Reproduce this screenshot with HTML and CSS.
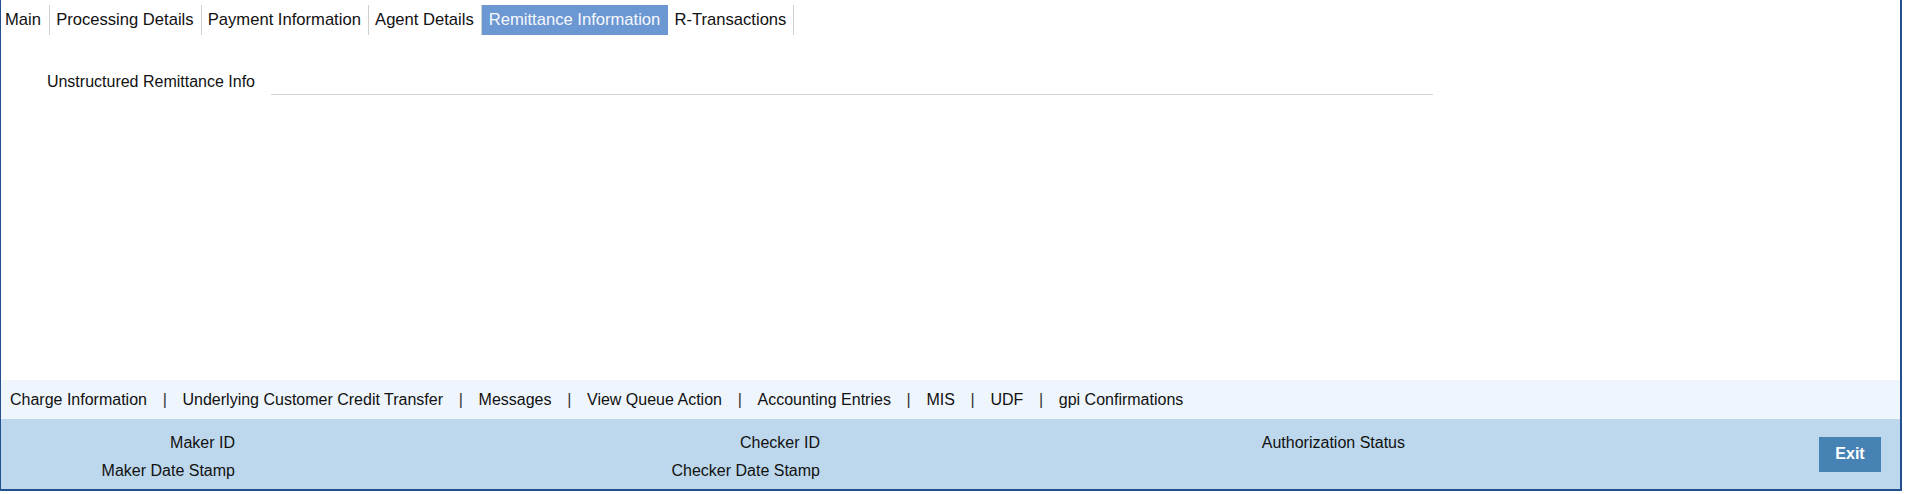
FILE: index.html
```html
<!DOCTYPE html>
<html lang="en">
<head>
<meta charset="utf-8">
<title>Remittance Information</title>
<link rel="stylesheet" href="styles.css">
</head>
<body>
<div class="frame">
  <ul class="tabs">
    <li class="tab first">Main</li>
    <li class="tab">Processing Details</li>
    <li class="tab">Payment Information</li>
    <li class="tab">Agent Details</li>
    <li class="tab active">Remittance Information</li>
    <li class="tab">R-Transactions</li>
  </ul>

  <div class="content">
    <div class="field-row">
      <label class="field-label" for="uri">Unstructured Remittance Info</label>
      <input class="field-input" id="uri" type="text">
    </div>
  </div>

  <nav class="links">
    <a class="link">Charge Information</a><span class="sep">|</span>
    <a class="link">Underlying Customer Credit Transfer</a><span class="sep">|</span>
    <a class="link">Messages</a><span class="sep">|</span>
    <a class="link">View Queue Action</a><span class="sep">|</span>
    <a class="link">Accounting Entries</a><span class="sep">|</span>
    <a class="link">MIS</a><span class="sep">|</span>
    <a class="link">UDF</a><span class="sep">|</span>
    <a class="link">gpi Confirmations</a>
  </nav>

  <div class="audit">
    <div class="audit-fields">
      <span class="audit-label">Maker ID</span><span class="audit-value"></span>
      <span class="audit-label">Checker ID</span><span class="audit-value"></span>
      <span class="audit-label">Authorization Status</span><span class="audit-value"></span>
      <span class="audit-label">Maker Date Stamp</span><span class="audit-value"></span>
      <span class="audit-label">Checker Date Stamp</span><span class="audit-value"></span>
      <span class="audit-label"></span><span class="audit-value"></span>
    </div>
    <button class="exit-btn" type="button">Exit</button>
  </div>
</div>
</body>
</html>
```

FILE: styles.css
```css
html, body {
  margin: 0;
  padding: 0;
  background: #ffffff;
}

body {
  font-family: "Liberation Sans", Arial, sans-serif;
  color: #111111;
}

.frame {
  box-sizing: border-box;
  width: 1902px;
  height: 491px;
  border-left: 1px solid #23508f;
  border-right: 2px solid #23508f;
  border-bottom: 2px solid #23508f;
  display: flex;
  flex-direction: column;
}

/* Tabs */
.tabs {
  list-style: none;
  margin: 5px 0 0 0;
  padding: 0;
  display: flex;
  height: 30px;
}

.tab {
  font-size: 16.6px;
  line-height: 30px;
  padding: 0 7px 0 6.2px;
  border-right: 1px solid #cfcfcf;
  color: #111111;
  white-space: nowrap;
}

.tab.first {
  padding-left: 4px;
  padding-right: 8px;
}

.tab.active {
  background: #6b97d3;
  color: #f7f9fc;
  border-right-color: #6b97d3;
  padding: 0 7px;
}

/* Content */
.content {
  flex: 1;
}

.field-row {
  display: flex;
  align-items: center;
  height: 26px;
  margin-top: 34px;
}

.field-label {
  width: 254px;
  text-align: right;
  font-size: 16px;
  color: #111111;
}

.field-input {
  box-sizing: border-box;
  margin-left: 16px;
  width: 1162px;
  height: 26px;
  border: none;
  border-bottom: 1px solid #d4d4d4;
  background: transparent;
  outline: none;
  font: inherit;
}

/* Links strip */
.links {
  height: 39px;
  background: #eef5fd;
  display: flex;
  align-items: center;
  padding-left: 9px;
  font-size: 16px;
  white-space: nowrap;
}

.link {
  color: #111111;
}

.sep {
  margin: 0 15.7px;
  color: #333333;
}

/* Audit area */
.audit {
  height: 70px;
  background: #bdd8ec;
  display: flex;
  align-items: center;
}

.audit-fields {
  align-self: flex-start;
  padding-top: 10px;
  display: grid;
  grid-template-columns: 234px 351px 234px 351px 234px 351px;
  grid-auto-rows: 28px;
  font-size: 16px;
}

.audit-label {
  text-align: right;
  line-height: 28px;
  color: #111111;
  white-space: nowrap;
}

.audit-value {
  line-height: 28px;
}

.exit-btn {
  margin-left: auto;
  margin-right: 19px;
  width: 62px;
  height: 35px;
  border: none;
  background: #4682b4;
  color: #ffffff;
  font-family: "Liberation Sans", Arial, sans-serif;
  font-weight: bold;
  font-size: 16px;
  padding: 0;
}
```
